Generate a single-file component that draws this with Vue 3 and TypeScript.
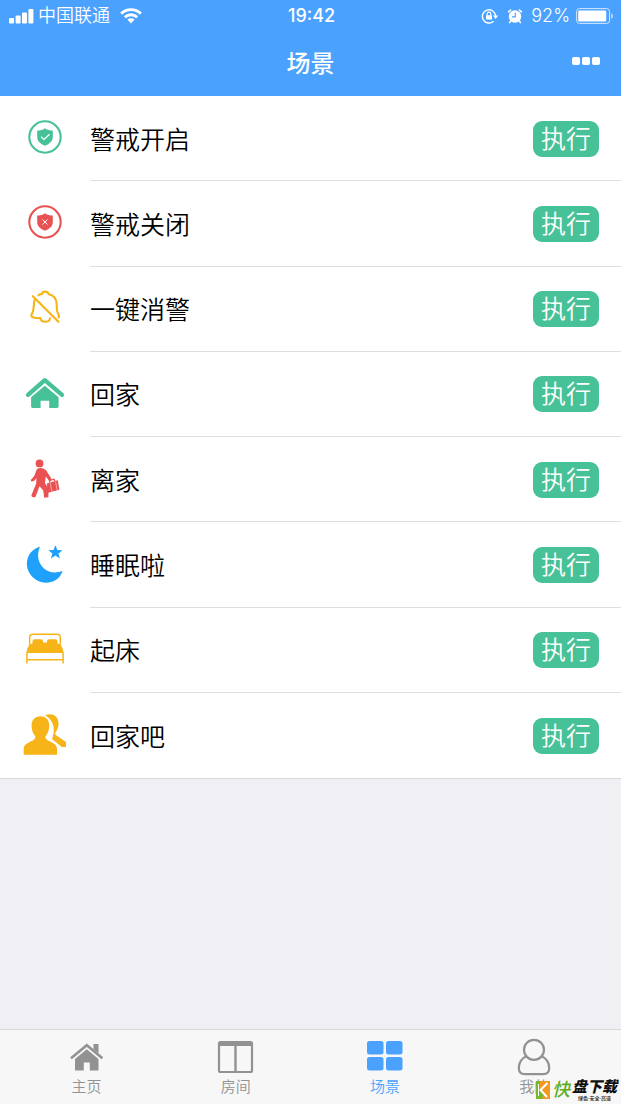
<script setup lang="ts">
import { ref } from 'vue'

type IconName = 'armed' | 'disarmed' | 'mute' | 'home' | 'leave' | 'sleep' | 'bed' | 'people'

interface Scene {
  name: string
  icon: IconName
}

interface Tab {
  label: string
  icon: 'house' | 'room' | 'grid' | 'user'
}

const scenes: Scene[] = [
  { name: '警戒开启', icon: 'armed' },
  { name: '警戒关闭', icon: 'disarmed' },
  { name: '一键消警', icon: 'mute' },
  { name: '回家', icon: 'home' },
  { name: '离家', icon: 'leave' },
  { name: '睡眠啦', icon: 'sleep' },
  { name: '起床', icon: 'bed' },
  { name: '回家吧', icon: 'people' },
]

const tabs: Tab[] = [
  { label: '主页', icon: 'house' },
  { label: '房间', icon: 'room' },
  { label: '场景', icon: 'grid' },
  { label: '我的', icon: 'user' },
]

const active = ref('场景')
</script>

<template>
  <div class="app">
    <header class="top">
      <div class="status">
        <div class="status-side">
          <svg class="signal" viewBox="0 0 25 16" aria-hidden="true">
            <rect x="0" y="10" width="5" height="5.500" rx="1" />
            <rect x="6.600" y="7.500" width="5" height="8" rx="1" />
            <rect x="13" y="4.500" width="5" height="11" rx="1" />
            <rect x="19.400" y="1" width="5" height="14.500" rx="1" />
          </svg>
          <span class="carrier">中国联通</span>
          <svg class="wifi" viewBox="0 0 22 16" aria-hidden="true">
            <path d="M1.200 5.600a14 14 0 0 1 19.600 0M4.800 9.200a8.900 8.900 0 0 1 12.400 0" fill="none" stroke="currentColor" stroke-width="2.900" />
            <path d="M7.400 11.600a5.200 5.200 0 0 1 7.200 0L11 15.400z" />
          </svg>
        </div>
        <time class="clock">19:42</time>
        <div class="status-side end">
          <svg class="lock" viewBox="0 0 18 16" aria-hidden="true">
            <path d="M12.600 13.200A6.600 6.600 0 1 1 14.600 8" fill="none" stroke="currentColor" stroke-width="1.400" />
            <path d="M12 7.500h5.200L14.600 11z" />
            <rect x="5" y="7.200" width="6" height="4.400" rx=".5" />
            <path d="M6.200 7.400V5.900a1.800 1.800 0 0 1 3.600 0v1.500" fill="none" stroke="currentColor" stroke-width="1.200" />
          </svg>
          <svg class="alarm" viewBox="0 0 16 16" aria-hidden="true">
            <circle cx="8" cy="8.500" r="6.200" />
            <path d="M1.600 3.800 3.600 2M14.400 3.800 12.400 2M3.600 13.200l-1 1.300M12.400 13.200l1 1.300" fill="none" stroke="currentColor" stroke-width="1.600" stroke-linecap="round" />
            <path d="M8.300 4.800v4H5" fill="none" stroke="#4ba2fe" stroke-width="1.200" />
          </svg>
          <span class="percent">92%</span>
          <svg class="battery" viewBox="0 0 38 16" aria-hidden="true">
            <rect x=".6" y=".6" width="33" height="14.800" rx="3" fill="none" stroke="currentColor" stroke-width="1" opacity=".75" />
            <rect x="2.200" y="2.400" width="28" height="11.200" rx="1.400" />
            <path d="M35.400 5.200c2 1 2 4.600 0 5.600z" opacity=".75" />
          </svg>
        </div>
      </div>
      <div class="nav">
        <h1>场景</h1>
        <button class="more" type="button" aria-label="更多">
          <svg viewBox="0 0 28 8" aria-hidden="true">
            <rect x="0" y="0" width="8" height="8" rx="2" />
            <rect x="10" y="0" width="8" height="8" rx="2" />
            <rect x="20" y="0" width="8" height="8" rx="2" />
          </svg>
        </button>
      </div>
    </header>

    <main>
      <ul class="scenes">
        <li v-for="scene in scenes" :key="scene.name" class="scene">
          <svg class="scene-icon" :class="scene.icon" viewBox="0 0 44 44" aria-hidden="true">
            <g v-if="scene.icon === 'armed' || scene.icon === 'disarmed'">
              <circle cx="22" cy="20" r="15.700" fill="none" stroke="currentColor" stroke-width="2.100" />
              <path d="M22 11.200C19.500 13 17 13.600 14.200 13.600V20c0 4.200 3.300 7 7.800 8.800 4.500-1.800 7.800-4.600 7.800-8.800v-6.400c-2.800 0-5.300-.6-7.800-2.400z" />
              <path v-if="scene.icon === 'armed'" d="m18 19.800 3 2.700 5.600-5.200" fill="none" stroke="#fff" stroke-width="1.200" />
              <path v-else d="m19.500 17.500 5 5m0-5-5 5" fill="none" stroke="#fff" stroke-width="1" />
            </g>
            <g v-else-if="scene.icon === 'mute'" fill="none" stroke="currentColor" stroke-width="2.100" stroke-linecap="round" stroke-linejoin="round">
              <path d="M15.500 8.200c1.500-.9 2.500-1 3.500-1.300.3-3 6-3 6.400 0 5.200 1.200 8.200 4.800 8.300 10.500.1 4-.2 7 1.700 9.700.8 1.200 1 2.400.2 3.400" />
              <path d="M11.600 13.200c-1.200 4-.5 8.800-1.900 12-1 2-2.200 3.300-.8 4.600 2.300 1.600 5.600 1 8.400 1.200.8 5 9 5 9.700.3" />
              <path d="m9.800 9.200 25.600 25.600" stroke-width="2.200" />
            </g>
            <g v-else-if="scene.icon === 'home'">
              <path d="M5 22.800 21.800 8.200 39 22.800" fill="none" stroke="currentColor" stroke-width="4.300" stroke-linecap="round" stroke-linejoin="round" />
              <path d="M21.800 13.800 35.600 25.300v9c0 1.200-.5 1.700-1.700 1.700h-7.700v-7.200h-8.600V36H9.800c-1.200 0-1.700-.5-1.700-1.700v-9z" />
            </g>
            <g v-else-if="scene.icon === 'leave'">
              <circle cx="16.500" cy="5.400" r="3.900" />
              <path d="M14 11c3-1.800 7.500-1 9 2l5 8-1.800 1.500-3.400-4-.8 6.500 3.600 6-.2 8.300-4.200.4-.9-7.200-3.800-4.300-3.800 10.200c-.8 1.600-4.800 1-4.200-1.300l4.700-11.600.2-5.500-1.800 2.400-2 .8c-1.800 1-2.500-1.700-.6-2.500l2.300-3z" />
              <path d="m22 13.500 5 8" fill="none" stroke="currentColor" stroke-width="3.200" stroke-linecap="round" />
              <path d="m23.800 25.500 11-3.300 1.600 9.500-11.500 3z" />
              <path d="m26.800 24.600-.3-2.200 4.600-1.200.7 2" fill="none" stroke="currentColor" stroke-width="1.200" />
              <path d="m27.300 25 1.500 8.400m3.800-9.800 1.500 8.300" stroke="#fff" stroke-width=".5" />
            </g>
            <g v-else-if="scene.icon === 'sleep'">
              <path d="M17 3.800C7 6.600 2 16 4.500 25.500c2.700 10 13.500 16.200 23.500 13.600 5.500-1.400 9.700-5.300 11.600-11.100-6.200 2.300-13.600 2-18.600-2.500-6.200-5.500-7.500-14-4-21.700z" />
              <path d="m32.400 2.200 1.900 4.900 5.200.1-4.100 3.200 1.500 5.100-4.500-3-4.500 3 1.500-5.100-4.100-3.200 5.200-.1z" />
            </g>
            <g v-else-if="scene.icon === 'bed'">
              <path d="M6.700 16V9.500c0-2.200 1-3.300 3.200-3.300h24.200c2.200 0 3.200 1.100 3.200 3.300V16" fill="none" stroke="currentColor" stroke-width="1.500" />
              <path d="M9.500 15.500v-2c0-1.500.7-2.200 2.200-2.200h6c1.500 0 2.300.7 2.300 2.200v1h4v-1c0-1.500.8-2.200 2.300-2.200h6c1.500 0 2.200.7 2.200 2.200v2l3.600 1 1.700 8.500H4.200l1.700-8.500z" />
              <path d="M3.900 35.500v-10l1.500-6M40.100 35.500v-10l-1.500-6M4 31.800h36" fill="none" stroke="currentColor" stroke-width="1.500" />
            </g>
            <g v-else>
              <path d="M22 2.300C28 -.7 36.200 2 35.500 11.500c-.3 3.500-1.300 6-3.200 8.200-.3 1.600.6 2.800 2.700 3.800l8 5.500v5h-4.200L29 26c3-7 3.200-18-7-23.700z" />
              <path d="M17.500 3.300c6 0 9 4.200 8.700 10-.2 4.200-1.500 7.600-3.700 10-.4 2.200.7 3.300 3 4.400 5 2.300 8.500 3.800 8.500 8.300v5.800H.7V36c0-4.500 3.800-6 8.600-8.300 2.200-1.100 3.300-2.200 3-4.400-2.300-2.400-3.500-5.800-3.700-10-.3-5.800 2.900-10 8.900-10z" />
            </g>
          </svg>
          <div class="scene-body">
            <span>{{ scene.name }}</span>
            <button class="run" type="button">执行</button>
          </div>
        </li>
      </ul>
    </main>

    <nav class="tabs">
      <button
        v-for="tab in tabs"
        :key="tab.label"
        type="button"
        class="tab"
        :class="{ active: active === tab.label }"
        @click="active = tab.label"
      >
        <svg viewBox="0 0 40 40" aria-hidden="true">
          <g v-if="tab.icon === 'house'">
            <path d="m4 21.200 15.800-13L35.400 21.200" fill="none" stroke="currentColor" stroke-width="2.600" />
            <path d="M26.500 7h5v9.500l-5-4.200z" />
            <path d="M19.800 12.200 31.500 22v11.600h-8.700v-8h-6v8H8V22z" />
          </g>
          <g v-else-if="tab.icon === 'room'">
            <rect x="3" y="5" width="33" height="30" rx="1.500" fill="none" stroke="currentColor" stroke-width="2.200" />
            <path d="M3 5h33v4H3z" />
            <path d="M19.500 8v27" stroke="currentColor" stroke-width="2.400" />
          </g>
          <g v-else-if="tab.icon === 'grid'">
            <rect x="2" y="4" width="16.500" height="13.500" rx="2.500" />
            <rect x="21" y="4" width="16.500" height="13.500" rx="2.500" />
            <rect x="2" y="20" width="16.500" height="13.500" rx="2.500" />
            <rect x="21" y="20" width="16.500" height="13.500" rx="2.500" />
          </g>
          <g v-else fill="none" stroke="currentColor" stroke-width="2.200">
            <circle cx="20" cy="12.800" r="10" />
            <path d="M12.400 19.300C7.500 21.500 4.800 26 4.800 31c0 4 1.800 6.200 5.700 6.200h19c3.900 0 5.700-2.200 5.700-6.200 0-5-2.700-9.500-7.600-11.700" />
          </g>
        </svg>
        <span>{{ tab.label }}</span>
      </button>
    </nav>

    <div class="watermark">
      <svg viewBox="0 0 14 18" aria-hidden="true">
        <path d="M0 0h14v18H0z" fill="#f39a1e" />
        <path d="M0 0h4v7l4 5-2 6H0z" fill="#79b72c" />
        <path d="M11.500 2 4.500 9l6.500 7" fill="none" stroke="#fff" stroke-width="2" />
        <path d="M2.500 3v12" stroke="#fff" stroke-width="1" />
      </svg>
      <span class="mark-lead">快</span>
      <span class="mark-text">
        <b>盘下载</b>
        <small>绿色·安全·高速</small>
      </span>
    </div>
  </div>
</template>

<style>
body {
  margin: 0;
  background: #efeff4;
}
</style>

<style scoped>
.app {
  position: relative;
  display: flex;
  flex-direction: column;
  min-height: 100vh;
  font-family: Inter, "Noto Sans CJK SC", sans-serif;
  color: #000;
}

svg {
  display: block;
  flex: none;
  fill: currentColor;
}

button {
  margin: 0;
  padding: 0;
  border: 0;
  background: none;
  font: inherit;
  color: inherit;
  cursor: pointer;
}

.top {
  height: 96px;
  background: #4ba2fe;
  color: #fff;
}

.status {
  display: grid;
  grid-template-columns: 1fr auto 1fr;
  align-items: center;
  height: 32px;
  padding: 0 7px 0 9px;
  font-size: 18px;
  line-height: 32px;
}

.status-side {
  display: flex;
  align-items: center;
}

.end {
  justify-content: flex-end;
}

.signal {
  width: 25px;
  height: 16px;
}

.carrier {
  margin: 0 10px 0 4px;
  font-weight: 350;
}

.wifi {
  width: 22px;
  height: 16px;
}

.clock {
  font-weight: 500;
}

.lock {
  width: 18px;
  height: 16px;
  margin-right: 8px;
}

.alarm {
  width: 16px;
  height: 16px;
  margin-right: 8px;
}

.percent {
  margin-right: 6px;
  font-weight: 300;
}

.battery {
  width: 38px;
  height: 16px;
}

.nav {
  display: grid;
  grid-template-columns: 1fr auto 1fr;
  align-items: center;
  height: 64px;
  padding: 0 21px;
}

h1 {
  grid-column: 2;
  margin: 0;
  font-size: 24px;
  line-height: 32px;
  font-weight: 500;
}

.more {
  justify-self: end;
  padding: 8px 0 14px;
}

.more svg {
  width: 28px;
  height: 8px;
}

main {
  flex: 1;
}

.scenes {
  display: grid;
  grid-auto-rows: 1fr;
  min-height: 683px;
  margin: 0;
  padding: 0;
  list-style: none;
  background: #fff;
  border-bottom: 1px solid #d9d9dc;
  box-sizing: border-box;
}

.scene {
  display: flex;
  align-items: center;
}

.scene-icon {
  width: 44px;
  height: 44px;
  margin: 0 23px;
}

.armed,
.home {
  color: #47c197;
}

.disarmed,
.leave {
  color: #ea5153;
}

.mute,
.bed,
.people {
  color: #f7b418;
}

.sleep {
  color: #1fa1fb;
}

.scene-body {
  flex: 1;
  display: flex;
  align-items: center;
  justify-content: space-between;
  align-self: stretch;
  padding: 1px 22px 0 0;
  border-bottom: 1px solid #dedee0;
  font-size: 25px;
  font-weight: 350;
  line-height: 36px;
}

.scene-body span {
  padding-top: 2px;
}

.scene:last-child .scene-body {
  border-bottom: 0;
}

.run {
  width: 66px;
  height: 36px;
  border-radius: 9px;
  background: #47c197;
  color: #fff;
  line-height: 36px;
}

.tabs {
  display: grid;
  grid-template-columns: repeat(4, 1fr);
  box-sizing: border-box;
  height: 75px;
  padding: 7px 12px 0;
  border-top: 1px solid #d8d8da;
  background: #f7f7f7;
}

.tab {
  display: flex;
  flex-direction: column;
  align-items: center;
  color: #929292;
  font-size: 15px;
  line-height: 20px;
  font-weight: 350;
}

.tab.active {
  color: #4ba2fe;
}

.tab svg {
  width: 40px;
  height: 40px;
}

.watermark {
  position: absolute;
  right: 4px;
  bottom: 3px;
  display: flex;
  align-items: center;
  gap: 2px;
  color: #111;
}

.watermark svg {
  width: 14px;
  height: 18px;
}

.mark-lead {
  color: #5fae26;
  font-size: 18px;
  line-height: 20px;
  font-style: italic;
  font-weight: 500;
}

.mark-text {
  display: flex;
  flex-direction: column;
  align-items: center;
  gap: 2px;
}

.mark-text b {
  font-size: 15px;
  line-height: 15px;
  font-style: italic;
  font-weight: 900;
}

.mark-text small {
  font-size: 5px;
  line-height: 5px;
  font-weight: 500;
}
</style>
